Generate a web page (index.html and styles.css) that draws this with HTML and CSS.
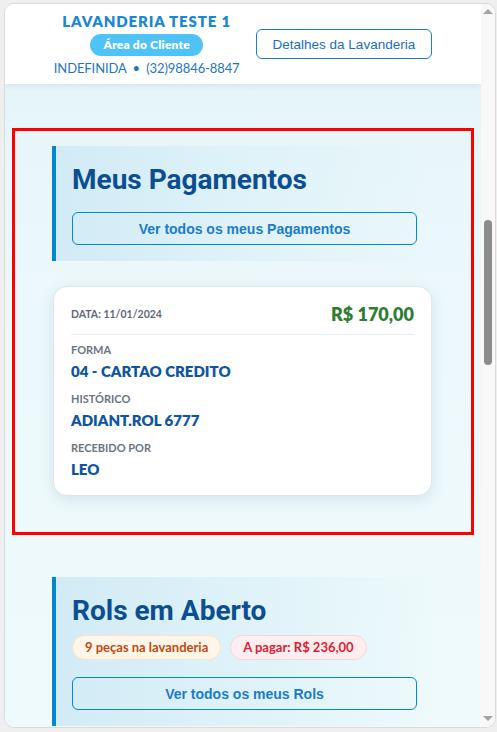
FILE: index.html
```html
<!DOCTYPE html>
<html lang="pt-BR">
<head>
<meta charset="utf-8">
<title>Área do Cliente - Lavanderia Teste 1</title>
<link rel="stylesheet" href="styles.css">
</head>
<body>
<div class="window">
  <div class="viewport">
    <header class="topbar">
      <div class="brand">
        <h1 class="brand-name">LAVANDERIA TESTE 1</h1>
        <span class="brand-tag">Área do Cliente</span>
        <p class="brand-info">INDEFINIDA <span class="sep">•</span> (32)98846-8847</p>
      </div>
      <button class="btn-outline" type="button">Detalhes da Lavanderia</button>
    </header>

    <main class="content">
      <section class="focus-box">
        <div class="panel">
          <div class="panel-head">
            <h2 class="panel-title">Meus Pagamentos</h2>
            <button class="btn-wide" type="button">Ver todos os meus Pagamentos</button>
          </div>

          <article class="pay-card">
            <div class="pay-top">
              <span class="pay-date">DATA: 11/01/2024</span>
              <span class="pay-amount">R$ 170,00</span>
            </div>
            <dl class="pay-fields">
              <div class="field">
                <dt>FORMA</dt>
                <dd>04 - CARTAO CREDITO</dd>
              </div>
              <div class="field">
                <dt>HISTÓRICO</dt>
                <dd>ADIANT.ROL 6777</dd>
              </div>
              <div class="field">
                <dt>RECEBIDO POR</dt>
                <dd>LEO</dd>
              </div>
            </dl>
          </article>
        </div>
      </section>

      <section class="panel panel-rols">
        <div class="panel-head">
          <h2 class="panel-title">Rols em Aberto</h2>
          <div class="chips">
            <span class="chip chip-pieces">9 peças na lavanderia</span>
            <span class="chip chip-due">A pagar: R$ 236,00</span>
          </div>
          <button class="btn-wide" type="button">Ver todos os meus Rols</button>
        </div>
      </section>
    </main>
  </div>

  <div class="scrollbar">
    <span class="arrow arrow-up"></span>
    <div class="track"><span class="thumb" style="margin-top: 206px; height: 145px;"></span></div>
    <span class="arrow arrow-down"></span>
  </div>
</div>
</body>
</html>
```

FILE: styles.css
```css
* {
  box-sizing: border-box;
}

html,
body {
  margin: 0;
  padding: 0;
}

body {
  background: #efefef;
  font-family: Lato, "Noto Sans", sans-serif;
  overflow: hidden;
}

h1,
h2,
p,
dl,
dd {
  margin: 0;
}

/* framed app window */
.window {
  margin: 3px 0 0 4px;
  width: 492px;
  height: 725px;
  border: 1px solid #dadada;
  border-radius: 10px;
  background: #ffffff;
  overflow: hidden;
  display: flex;
}

.viewport {
  flex: 1;
  min-width: 0;
  overflow: hidden;
  background: linear-gradient(180deg, #e4f4f9 0%, #ecf8fb 40%, #eefafc 100%);
}

/* top bar */
.topbar {
  height: 80px;
  background: #ffffff;
  display: flex;
  align-items: center;
  justify-content: center;
  gap: 16px;
  box-shadow: 0 2px 6px rgba(40, 90, 120, 0.10);
  position: relative;
  z-index: 1;
}

.brand {
  display: flex;
  flex-direction: column;
  align-items: center;
}

.brand-name {
  font-size: 15px;
  line-height: 18px;
  font-weight: 800;
  color: #1887d4;
  letter-spacing: 0.85px;
}

.brand-tag {
  margin-top: 4px;
  height: 22px;
  line-height: 22px;
  padding: 0 13px;
  border-radius: 11px;
  background: #4fc3f7;
  color: #ffffff;
  font-size: 12px;
  font-weight: 800;
  letter-spacing: 0.2px;
}

.brand-info {
  margin-top: 4px;
  font-size: 13px;
  line-height: 16px;
  color: #1f76c0;
  letter-spacing: -0.1px;
}

.brand-info .sep {
  margin: 0 3px;
}

.btn-outline {
  height: 30px;
  padding: 0 16px;
  border: 1px solid #1a7fcc;
  border-radius: 6px;
  background: #ffffff;
  color: #1a6fb8;
  font-family: "Liberation Sans", Arial, sans-serif;
  font-size: 13.5px;
}

/* main content */
.content {
  padding: 44px 7px 0;
}

.focus-box {
  border: 3px solid #ff0000;
  padding: 15px 0 36px 37px;
}

.panel {
  width: 381px;
}

.panel-head {
  border-left: 4px solid #0288d1;
  background: linear-gradient(90deg, #d2ebf6 0%, #e0f3f9 55%, rgba(236, 249, 252, 0) 100%);
  padding: 16px 16px 16px;
}

.panel-title {
  font-family: Roboto, Lato, sans-serif;
  font-size: 28px;
  line-height: 36px;
  font-weight: 700;
  color: #0c4e92;
}

.btn-wide {
  display: block;
  width: 100%;
  height: 33px;
  margin-top: 14px;
  border: 1px solid #0288d1;
  border-radius: 6px;
  background: transparent;
  color: #1a7ccc;
  font-family: "Liberation Sans", Arial, sans-serif;
  font-size: 14px;
  font-weight: 700;
}

/* payment card */
.pay-card {
  margin-top: 25px;
  margin-left: 1px;
  width: 379px;
  background: #ffffff;
  border: 1px solid #dde6ec;
  border-radius: 14px;
  box-shadow: 0 4px 14px rgba(40, 90, 130, 0.12);
  padding: 16px 17px 16px;
}

.pay-top {
  display: flex;
  align-items: center;
  justify-content: space-between;
  height: 32px;
  padding-bottom: 10px;
  border-bottom: 1px solid #e9eef2;
}

.pay-date {
  font-size: 10.5px;
  font-weight: 700;
  color: #5f6977;
}

.pay-amount {
  font-size: 18px;
  line-height: 22px;
  font-weight: 800;
  color: #2e7d32;
}

.pay-fields {
  margin-top: 8px;
  display: flex;
  flex-direction: column;
  gap: 11px;
}

.field dt {
  font-size: 11px;
  line-height: 14px;
  font-weight: 700;
  color: #6a7482;
}

.field dd {
  margin-top: 4px;
  font-size: 15px;
  line-height: 20px;
  font-weight: 800;
  color: #0e55a0;
}

/* open orders */
.panel-rols {
  margin: 42px 0 0 40px;
}

.chips {
  display: flex;
  gap: 9px;
  margin-top: 6px;
}

.chip {
  height: 25px;
  line-height: 23px;
  padding: 0 12px;
  border-radius: 13px;
  border: 1px solid;
  font-size: 13px;
  font-weight: 700;
}

.chip-pieces {
  background: #fff6ea;
  border-color: #fbe2bf;
  color: #c24a0e;
}

.chip-due {
  background: #ffeef0;
  border-color: #fbd3d9;
  color: #dc2030;
}

.panel-rols .btn-wide {
  margin-top: 17px;
}

/* scrollbar column */
.scrollbar {
  width: 14px;
  background: #f8f8f8;
  display: flex;
  flex-direction: column;
  align-items: center;
}

.arrow {
  width: 0;
  height: 0;
  border-left: 5px solid transparent;
  border-right: 5px solid transparent;
}

.arrow-up {
  margin-top: 5px;
  border-bottom: 5px solid #a3a3a3;
}

.arrow-down {
  margin-bottom: 6px;
  border-top: 5px solid #a3a3a3;
}

.track {
  flex: 1;
  width: 100%;
  display: flex;
  flex-direction: column;
  align-items: center;
}

.thumb {
  display: block;
  width: 8px;
  border-radius: 4px;
  background: #8c8c8c;
}
```
